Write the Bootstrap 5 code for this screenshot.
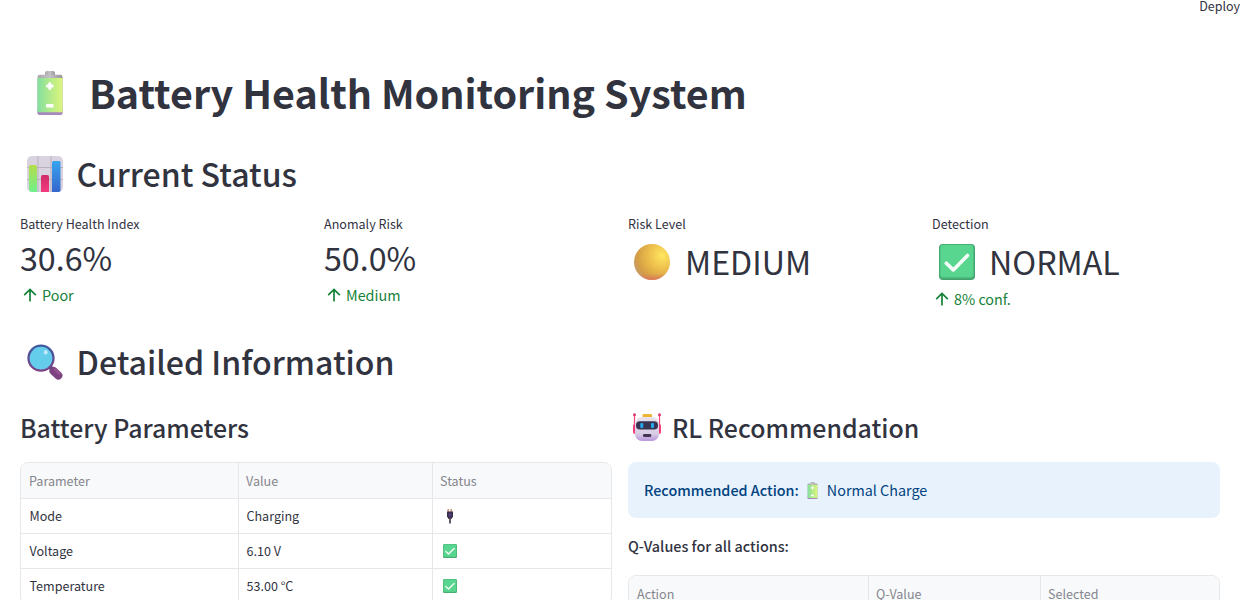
<!DOCTYPE html>
<html lang="en">
<head>
<meta charset="utf-8">
<meta name="viewport" content="width=device-width, initial-scale=1">
<title>Battery Health Monitoring System</title>
<link href="https://cdn.jsdelivr.net/npm/bootstrap@5.3.0/dist/css/bootstrap.min.css" rel="stylesheet">
<style>
body{font-family:"Noto Sans CJK SC","Noto Sans",sans-serif;color:#31333f;background:#fff;height:600px;overflow:hidden}
.topbar{height:58px;font-size:12.5px;line-height:12px;padding-right:11px}
.page{padding:0 31px 0 20px}
h1,h2,h3{margin:0;white-space:nowrap}
h1{font-size:39.45px;font-weight:700;line-height:68px;height:70px}
h1 span{padding-bottom:2px}
h2{font-size:32.05px;font-weight:500;line-height:42px;height:44px}
h2 span{padding-bottom:2px}
h3{font-size:24.88px;font-weight:500;line-height:30px;height:34px}
h3 svg{position:relative;top:1px}
.metric-label{font-size:12.55px;line-height:20px}
.metric-value{font-size:32.2px;line-height:46px;height:49px;font-weight:400;white-space:nowrap}
.metric-value.tall{height:53px;line-height:50px;padding-top:3px}
.metric-value.tall span{padding-bottom:3px}
.delta{font-size:14.35px;line-height:24px;color:#158237;padding-left:3px}
.delta svg{margin-right:5px}
.grid-table{border:1px solid #e6e7ea;border-radius:8px;overflow:hidden;font-size:12.55px}
.grid-table table{table-layout:fixed;width:100%;border-collapse:separate;border-spacing:0}
.grid-table th,.grid-table td{height:35px;padding:0 8px 0 8.5px;line-height:20px;border-bottom:1px solid #e6e7ea;border-right:1px solid #e6e7ea;font-weight:400;vertical-align:middle}
.grid-table th{background:#f8f9fb;color:#85868d;height:36px;padding:1px 8px 0 7px}
.grid-table th:first-child{padding-left:8px}
.grid-table td:not(:first-child){padding-left:7.5px}
.grid-table th:last-child,.grid-table td:last-child{border-right:0}
.action-note{background:#e8f2fc;color:#004280;border-radius:8px;height:56px;padding:0 16px;font-size:14.35px}
.q-title{font-size:14.4px;line-height:24px;font-weight:500}
svg{display:block;flex:none}
</style>
</head>
<body>
<svg width="0" height="0" class="position-absolute" aria-hidden="true">
<defs>
<linearGradient id="gBat"><stop offset="0" stop-color="#83dfa0"/><stop offset=".5" stop-color="#b3ea8a"/><stop offset="1" stop-color="#dcf57f"/></linearGradient>
<linearGradient id="gCap"><stop offset="0" stop-color="#aaa6ad"/><stop offset=".5" stop-color="#c5c2c6"/><stop offset="1" stop-color="#96939a"/></linearGradient>
<linearGradient id="gBar1" x2="0" y2="1"><stop offset="0" stop-color="#b5dc4a"/><stop offset="1" stop-color="#6ef08b"/></linearGradient>
<linearGradient id="gBar2" x2="0" y2="1"><stop offset="0" stop-color="#d02b66"/><stop offset="1" stop-color="#f33b80"/></linearGradient>
<linearGradient id="gBar3" x2="0" y2="1"><stop offset="0" stop-color="#37a4ef"/><stop offset="1" stop-color="#3466cc"/></linearGradient>
<radialGradient id="gSun" cx=".78" cy=".32" r=".8"><stop offset="0" stop-color="#ffe761"/><stop offset=".45" stop-color="#eec04c"/><stop offset=".85" stop-color="#d59f44"/><stop offset="1" stop-color="#c99a60"/></radialGradient>
<linearGradient id="gSunLow" x2="0" y2="1"><stop offset=".82" stop-color="#e07060" stop-opacity="0"/><stop offset="1" stop-color="#e07060" stop-opacity=".8"/></linearGradient>
<linearGradient id="gRim" x2="0" y2="1"><stop offset="0" stop-color="#3e5aa0"/><stop offset="1" stop-color="#7c4386"/></linearGradient>
<linearGradient id="gFace" x2="0" y2="1"><stop offset="0" stop-color="#eae2ee"/><stop offset=".7" stop-color="#d8cde3"/><stop offset="1" stop-color="#b995df"/></linearGradient>
<symbol id="battery" viewBox="0 0 26 44"><rect x="8" y="0" width="10" height="6" rx="2" fill="url(#gCap)"/><rect x=".5" y="3.8" width="25" height="40" rx="2.2" fill="url(#gCap)"/><path d="M.5 38h25v4q0 2-2 2h-21q-2 0-2-2z" fill="#a789be"/><rect x=".5" y="7" width="25" height="34.3" rx=".6" fill="url(#gBat)"/><path d="M12.8 12.5v5M10.3 15h5" stroke="#fff" stroke-width="3" stroke-linecap="round"/><rect x="9" y="33" width="7.6" height="3.6" rx="1" fill="#fff"/></symbol>
<symbol id="chart" viewBox="0 0 36 36"><rect width="36" height="36" rx="5" fill="#d9d2df"/><path d="M11 0v36M24 0v36M0 11.5h36M0 23.5h36" stroke="#b9b1c1" stroke-width="1"/><path d="M2 10.5Q2 9 3.5 9h5q1.500 0 1.500 1.500V36H5q-3 0-3-3z" fill="url(#gBar1)"/><path d="M14 20.500q0-1.500 1.500-1.500h5q1.500 0 1.500 1.500V36h-8z" fill="url(#gBar2)"/><path d="M25 6.500Q25 5 26.500 5h5.500Q33.500 5 33.500 6.500V35q-1 1-2 1h-6.500z" fill="url(#gBar3)"/></symbol>
<symbol id="circle" viewBox="0 0 36 36"><circle cx="18" cy="18" r="18" fill="url(#gSun)"/><circle cx="18" cy="18" r="18" fill="url(#gSunLow)"/></symbol>
<symbol id="check" viewBox="0 0 36 36"><rect width="36" height="36" rx="4" fill="#42a16d"/><rect x=".6" y=".4" width="34.600" height="34" rx="3.500" fill="#4dbb7c"/><rect x="1.500" y="1" width="32.500" height="32" rx="3" fill="#58d58e"/><path d="M7.300 19.200l7 6.700L28.500 11.500" fill="none" stroke="#f5fbf8" stroke-width="3.600" stroke-linecap="round" stroke-linejoin="round"/></symbol>
<symbol id="lens" viewBox="0 0 36 36"><path d="M21 21l5 5" stroke="#51457f" stroke-width="4"/><path d="M26.500 27l4.800 4.400" stroke="#7d4280" stroke-width="8.200" stroke-linecap="round"/><path d="M28 25.500l4.500 4" stroke="#955091" stroke-width="2.500" stroke-linecap="round"/><circle cx="14" cy="14.200" r="12.500" fill="#64cdec" stroke="url(#gRim)" stroke-width="2.300"/><ellipse cx="18.700" cy="8.300" rx="2" ry="2.200" fill="#c0e8fa"/></symbol>
<symbol id="robot" viewBox="0 0 28 28"><path d="M1.500 2v18M26.500 2v18" stroke="#f5477a" stroke-width="1.200"/><circle cx="1.500" cy="1.800" r="1.500" fill="#d93a6b"/><circle cx="26.500" cy="1.800" r="1.500" fill="#d93a6b"/><rect x="0" y="11" width="5" height="10" rx="2" fill="#f43c79"/><rect x="23" y="11" width="5" height="10" rx="2" fill="#f43c79"/><rect x="9.500" y="1" width="9.500" height="5" rx="1.300" fill="#efb635"/><rect x="2" y="4" width="24" height="24" rx="7" fill="url(#gFace)"/><rect x="3" y="8.200" width="22" height="8.300" rx="3.800" fill="#383552"/><rect x="7.300" y="10" width="3" height="5" rx="1" fill="#24a8eb"/><rect x="18" y="10" width="3" height="5" rx="1" fill="#24a8eb"/><rect x="10" y="21" width="8.300" height="3" rx="1.300" fill="#423653"/></symbol>
<symbol id="plug" viewBox="0 0 8 15"><path d="M2.200 0v3.500M5.200 0v3.500" stroke="#c59578" stroke-width="1.500"/><path d="M1 2.500h6v5L5.500 10H2.500L1 7.500z" fill="#3a2e49"/><path d="M2.700 4.500h2.600v3H2.700z" fill="#58418a"/><path d="M4 9v5.500" stroke="#554b5b" stroke-width="1.800"/></symbol>
<symbol id="up" viewBox="0 0 14 14"><path d="M7 13.500V1.500M1.200 7.200L7 1.400l5.800 5.800" fill="none" stroke="#158237" stroke-width="1.700"/></symbol>
</defs>
</svg>

<header class="topbar d-flex justify-content-end"><span>Deploy</span></header>
<main class="page">
  <h1 class="d-flex align-items-center"><svg style="margin:0 25px 0 16px" width="28" height="44"><use href="#battery"/></svg><span>Battery Health Monitoring System</span></h1>

  <h2 class="d-flex align-items-center" style="margin-top:24px"><svg style="margin:0 13.500px 0 7px" width="36" height="36"><use href="#chart"/></svg><span>Current Status</span></h2>

  <section class="row gx-3" style="padding-top:18px;height:148px">
    <div class="col-3"><div class="metric-label">Battery Health Index</div><div class="metric-value">30.6%</div><div class="delta d-flex align-items-center"><svg width="14" height="14"><use href="#up"/></svg><span>Poor</span></div></div>
    <div class="col-3"><div class="metric-label">Anomaly Risk</div><div class="metric-value">50.0%</div><div class="delta d-flex align-items-center"><svg width="14" height="14"><use href="#up"/></svg><span>Medium</span></div></div>
    <div class="col-3"><div class="metric-label">Risk Level</div><div class="metric-value tall d-flex align-items-center"><svg style="margin:0 15px 0 6px" width="36" height="36"><use href="#circle"/></svg><span>MEDIUM</span></div></div>
    <div class="col-3"><div class="metric-label">Detection</div><div class="metric-value tall d-flex align-items-center"><svg style="margin:0 14px 0 7px" width="36" height="36"><use href="#check"/></svg><span>NORMAL</span></div><div class="delta d-flex align-items-center"><svg width="14" height="14"><use href="#up"/></svg><span>8% conf.</span></div></div>
  </section>

  <h2 class="d-flex align-items-center" style="margin-top:-4px"><svg style="margin:0 13.500px 0 7px" width="36" height="36"><use href="#lens"/></svg><span>Detailed Information</span></h2>

  <section class="row gx-3" style="padding-top:28px">
    <div class="col-6">
      <h3>Battery Parameters</h3>
      <div class="grid-table" style="margin-top:16px"><table>
        <colgroup><col style="width:218px"><col style="width:194px"><col></colgroup>
        <thead><tr><th>Parameter</th><th>Value</th><th>Status</th></tr></thead>
        <tbody>
          <tr><td>Mode</td><td>Charging</td><td><svg style="margin-left:5.500px" width="8" height="15"><use href="#plug"/></svg></td></tr>
          <tr><td>Voltage</td><td>6.10 V</td><td><svg style="margin-left:2.500px" width="14" height="14"><use href="#check"/></svg></td></tr>
          <tr><td>Temperature</td><td>53.00 °C</td><td><svg style="margin-left:2.500px" width="14" height="14"><use href="#check"/></svg></td></tr>
        </tbody></table></div>
    </div>
    <div class="col-6">
      <h3 class="d-flex align-items-start"><svg style="margin:0 11px 0 5px" width="28" height="28"><use href="#robot"/></svg><span>RL Recommendation</span></h3>
      <div class="action-note d-flex align-items-center" style="margin-top:16px"><span style="font-weight:500">Recommended Action:</span><svg style="margin:0 9px 0 8px" width="11" height="17"><use href="#battery"/></svg><span>Normal Charge</span></div>
      <div class="q-title" style="margin:16px 0 17px">Q-Values for all actions:</div>
      <div class="grid-table"><table>
        <colgroup><col style="width:240px"><col style="width:172px"><col></colgroup>
        <thead><tr><th>Action</th><th>Q-Value</th><th>Selected</th></tr></thead></table></div>
    </div>
  </section>
</main>
<script src="https://cdn.jsdelivr.net/npm/bootstrap@5.3.0/dist/js/bootstrap.bundle.min.js"></script>
</body>
</html>
